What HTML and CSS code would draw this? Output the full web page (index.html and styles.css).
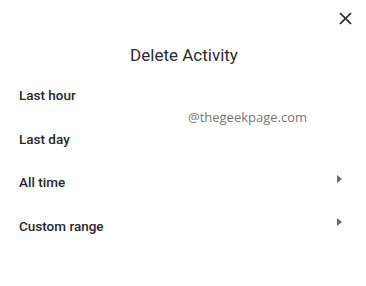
FILE: index.html
```html
<!DOCTYPE html>
<html lang="en">
<head>
<meta charset="utf-8">
<title>Delete Activity</title>
<link rel="stylesheet" href="styles.css">
</head>
<body>
<div class="dialog">
  <div class="header">
    <button class="close" aria-label="Close">
      <svg width="13" height="13" viewBox="0 0 13 13"><path d="M1 1L12 12M12 1L1 12" stroke="#202124" stroke-width="1.7" fill="none"/></svg>
    </button>
  </div>
  <h1 class="title">Delete Activity</h1>
  <ul class="options">
    <li class="option"><span>Last hour</span></li>
    <li class="option"><span>Last day</span></li>
    <li class="option"><span>All time</span><span class="arrow"></span></li>
    <li class="option"><span>Custom range</span><span class="arrow"></span></li>
  </ul>
  <div class="watermark">@thegeekpage.com</div>
</div>
</body>
</html>
```
FILE: styles.css
```css
html, body {
  margin: 0;
  padding: 0;
  background: #ffffff;
}
body {
  font-family: Roboto, "Liberation Sans", sans-serif;
  color: #202124;
}
.dialog {
  position: relative;
  width: 366px;
  height: 286px;
}
.header {
  display: flex;
  justify-content: flex-end;
  padding: 12px 14px 0 0;
  height: 13px;
}
.close {
  display: flex;
  border: 0;
  padding: 0;
  background: none;
  width: 13px;
  height: 13px;
}
.title {
  margin: 20px 0 0 0;
  font-size: 17px;
  font-weight: 400;
  line-height: 21px;
  text-align: center;
  padding-left: 2px;
  color: #2a2b2e;
}
.options {
  list-style: none;
  margin: 7px 0 0 0;
  padding: 0;
}
.option {
  display: flex;
  align-items: center;
  justify-content: space-between;
  height: 43.7px;
  padding: 0 24px 0 19px;
  font-size: 13.5px;
  font-weight: 500;
  line-height: 16px;
  color: #26272a;
}
.arrow {
  width: 0;
  height: 0;
  border-top: 4.5px solid transparent;
  border-bottom: 4.5px solid transparent;
  border-left: 5px solid #6b6b6b;
  margin-bottom: 7px;
}
.watermark {
  position: absolute;
  left: 188px;
  top: 108px;
  font-family: "Open Sans", "DejaVu Sans", sans-serif;
  font-size: 13px;
  line-height: 18px;
  color: #767676;
}
```
